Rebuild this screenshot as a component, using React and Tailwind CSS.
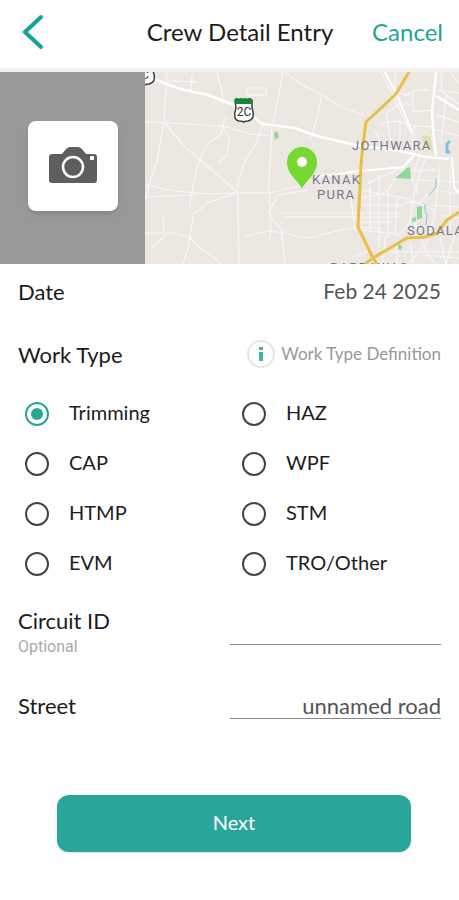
import { useState } from "react";

const workTypes = ["Trimming", "HAZ", "CAP", "WPF", "HTMP", "STM", "EVM", "TRO/Other"];

function CameraIcon() {
    return (
        <svg viewBox="0 0 48 38" className="w-12" aria-hidden="true">
            <path
                d="M3 7h10l4-5q2-2 4-2h8q2 0 4 2l4 5h8q3 0 3 3v23q0 3-3 3H3q-3 0-3-3V10q0-3 3-3z"
                fill="#5e5e5e"
            />
            <circle cx="24" cy="20" r="10" fill="none" stroke="#fff" strokeWidth="2.5" />
            <rect x="41" y="9" width="4" height="4" rx="1" fill="#fff" />
        </svg>
    );
}

function Shield({ x, y, children }) {
    return (
        <g transform={`translate(${x} ${y})`}>
            <path
                d="M1 2q2-2 4 0 2-2 4 0 2-2 4 0 2-2 5 0v8q2 5 1 9-1 3-5 4-3 0-4 1-2-1-5-1-4-1-4-4-1-4 1-9z"
                fill="#fff"
                stroke="#3c3c3c"
                strokeWidth="1.5"
            />
            <path d="M1 1q2-2 4 0 2-2 4 0 2-2 4 0 2-2 5 0v5H1z" fill="#168536" />
            <text x="10" y="18" textAnchor="middle" className="text-[12px]" fill="#333">
                {children}
            </text>
        </g>
    );
}

function CrewMap() {
    return (
        <svg
            viewBox="145 72 314 192"
            preserveAspectRatio="xMidYMid slice"
            className="h-48 min-w-0 flex-1 bg-[#ece8e1] font-['Roboto','Liberation_Sans',sans-serif]"
            role="img"
            aria-label="Map of Kanak Pura"
        >
            {/* side streets */}
            <g fill="none" stroke="#f7f7fb" strokeWidth="1.2" strokeLinejoin="round">
                <path d="M167 72l-3 50-7 40-8 22-4 18M145 122l25 1 52 3 28 8 20 2" />
                <path d="M165 123l18 22 17 15 20 17 18 16 1 71M145 185l30 6 35 3 27-1h33l32-8" />
                <path d="M145 197l52-2M237 193l-28 9-15 12-6 34-5 16M145 233h28l17 4M163 217l1 20-12 10" />
                <path d="M190 237l10 11 17 12 3 4M225 118l-4 16-15 11-9 22-8 40M222 126l8 13-3 16-8 7" />
                <path d="M264 122l-9 23-11 18-7 25M272 125l-3 60 2 47-2 10M283 72l-10 53M217 72l5 20 1 12" />
                <path d="M248 88h18v7h-20zM192 75l-1 18M167 81l30 1M285 72l14 11" />
                <path d="M299 83l22 11 20 13 24 9M322 94l-6 28-5 16M308 190l-30 5-9 17 4 8 8 9 4 35" />
                <path d="M245 236l25-5 20 3q16 6 28 2t34-8h30M282 213h120M282 217h118" />
                <path d="M381 72l12 23 9 20 11 21M395 72v20l14 4M404 96l13-6h12M413 92v20l20-2M413 104h-14l-12 8" />
                <path d="M365 185l16-8 18-8 17 2 20-1M363 190l12 3 30 5 30 12M411 156l-14 21-12 16-23 5" />
                <path d="M370 180v50M379 175v72M388 190v48M397 198l-2 38M361 205h43M359 222h34M358 230l40 4" />
                <path d="M406 202l14 1 8-9M355 230l-5-40M420 155l-8 24 6 14M425 159l-11 33-4 31-13 14" />
                <path d="M440 165l-5 48-8 30-18 20M450 170v60M435 190l24 4M430 205l29 2M441 215l18 3" />
                <path d="M419 180l40 2M397 240v24M410 243l4 21M424 247l11 17M440 237l6 27M390 252h69" />
                <path d="M386 235l-4 29M372 250l-18 6M425 210l-10 15 9 20M425 255l34 3M455 235l-9 29" />
                <path d="M441 72l1 20 17 12M450 72l9 12M437 90l22 3M446 95l-5 50M436 115l23 7M430 128l29 8" />
                <path d="M380 124l15-3 20 5 20 1M386 112l6 35M375 130l8 18M400 118v31M415 125l-3 28" />
            </g>
            {/* main streets */}
            <g fill="none" stroke="#fff" strokeLinejoin="round">
                <path strokeWidth="2.5" d="M145 76l35 13 28 6 24 9 16 8 14 12 33 4 22 8 38 9 45 6 26 6 23 2" />
                <path strokeWidth="2.5" d="M436 72l-4 40 2 28 2 16M436 96l23 14" />
                <path strokeWidth="2" d="M315 177l46-6 42-4 11-11M385 72l13 25 14 35M452 157l2 30 5 6" />
            </g>
            {/* parks and water */}
            <g fill="#91d79c">
                <path d="M395 178l12-10 3-1 1 12zM417 207l5-1v12l-5 2zM412 218l4-1v4l-4 1zM398 244l4 2-1 4-3-1z" />
                <path d="M274 133l3-2 2 6-4 3z" />
                <path d="M422 135l8 2 3 13-8-3z" fill="#dbe2a6" />
            </g>
            <g fill="none" stroke="#74c5e2">
                <path d="M450 141l-3 3v8h3" strokeWidth="3" />
                <path d="M436 179v8l-7 8M425 204v7l2 4-1 10" strokeWidth="1" />
            </g>
            {/* highway */}
            <g fill="none" stroke="#e9bf47" strokeWidth="3" strokeLinejoin="round">
                <path d="M409 72l-13 22-30 28-3 22-2 21-3 62 15 31 4 6" />
                <path d="M365 264l8-6 34-20 18-1 12-4 10-13 12-8" />
            </g>
            <g className="text-[13px] tracking-widest" fill="#757990">
                <text x="352" y="150">JOTHWARA</text>
                <text x="312" y="184">KANAK</text>
                <text x="317" y="199">PURA</text>
                <text x="407" y="235">SODALA</text>
                <text x="330" y="272">BARDAWAS</text>
            </g>
            <Shield x="234" y="98">2C</Shield>
            <Shield x="135" y="61">C</Shield>
            <path
                d="M302 189c-3-8-15-14-15-27a15 15 0 0 1 30 0c0 13-12 19-15 27z"
                fill="#78d832"
            />
            <circle cx="302" cy="162" r="5" fill="#fff" />
        </svg>
    );
}

export default function App() {
    const [workType, setWorkType] = useState("Trimming");

    return (
        <div className="min-h-screen bg-white text-[#1c1c1c] font-['Lato','Liberation_Sans',sans-serif]">
            <header className="flex h-[72px] items-center border-b-4 border-[#f1f1f1] pb-1 pl-5 pr-4">
                <button type="button" aria-label="Back" className="w-[88px] text-[#12a594]">
                    <svg viewBox="0 0 26 36" className="h-9" fill="none" stroke="currentColor" strokeWidth="4" strokeLinecap="round">
                        <path d="M21 3L5 18l16 15" />
                    </svg>
                </button>
                <h1 className="flex-1 text-center text-2xl">Crew Detail Entry</h1>
                <button type="button" className="text-2xl text-[#1fa593]">Cancel</button>
            </header>

            <div className="flex">
                <div className="flex h-48 w-[145px] items-center justify-center bg-[#999] pb-1">
                    <button
                        type="button"
                        aria-label="Take photo"
                        className="flex size-[90px] items-center justify-center rounded-lg bg-white shadow-md"
                    >
                        <CameraIcon />
                    </button>
                </div>
                <CrewMap />
            </div>

            <form onSubmit={(e) => e.preventDefault()}>
                <div className="flex h-[54px] items-center justify-between px-[18px] text-[22px]">
                    <span>Date</span>
                    <span className="text-[21px] text-[#555]">Feb 24 2025</span>
                </div>

                <div className="mt-[18px] flex h-9 items-center justify-between px-[18px]">
                    <h2 id="work-type" className="text-[22px]">Work Type</h2>
                    <button type="button" className="flex items-center gap-1.5 text-[#999]">
                        <span className="flex size-7 items-center justify-center rounded-full border-2 border-[#e6e6e6]">
                            <svg viewBox="0 0 4 14" className="h-3.5" fill="#3bb5a5" aria-hidden="true">
                                <path d="M0 0h4v3H0zM0 5h4v9H0z" />
                            </svg>
                        </span>
                        <span className="text-[17px]">Work Type Definition</span>
                    </button>
                </div>

                <div role="radiogroup" aria-labelledby="work-type" className="mt-[17px] grid grid-cols-2 pl-[25px]">
                    {workTypes.map((type) => (
                        <label key={type} className="flex h-[50px] items-center gap-5 text-xl">
                            <input
                                type="radio"
                                name="workType"
                                value={type}
                                checked={workType === type}
                                onChange={() => setWorkType(type)}
                                className="flex size-6 appearance-none items-center justify-center rounded-full border-2 border-[#444] checked:border-[#2aa698] checked:before:size-3 checked:before:rounded-full checked:before:bg-[#2aa698]"
                            />
                            <span className="pb-1">{type}</span>
                        </label>
                    ))}
                </div>

                <div className="mt-[18px] flex items-start justify-between px-[18px]">
                    <label htmlFor="circuit">
                        <span className="block text-[22px] leading-7">Circuit ID</span>
                        <span className="block font-['Roboto','Liberation_Sans',sans-serif] text-base leading-6 text-[#aaa]">
                            Optional
                        </span>
                    </label>
                    <input id="circuit" type="text" className="h-[38px] w-1/2 border-b border-[#888] text-right text-[21px] outline-none" />
                </div>

                <div className="mt-[33px] flex items-start justify-between px-[18px]">
                    <label htmlFor="street" className="text-[22px] leading-7">Street</label>
                    <input
                        id="street"
                        type="text"
                        defaultValue="unnamed road"
                        className="h-[27px] w-1/2 border-b border-[#888] text-right text-[22px] text-[#555] outline-none"
                    />
                </div>

                <div className="mt-[75px] pl-[57px] pr-12">
                    <button type="submit" className="h-[57px] w-full rounded-xl bg-[#2aa59a] pb-1 text-xl text-white shadow-sm">
                        Next
                    </button>
                </div>
            </form>
        </div>
    );
}
